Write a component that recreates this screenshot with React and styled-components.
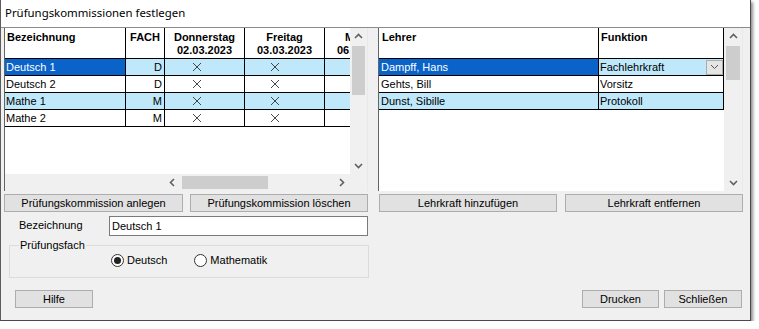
import React from 'react';
import styled, { createGlobalStyle } from 'styled-components';

const Global = createGlobalStyle`
  html, body { margin: 0; padding: 0; background: #ffffff; }
  body { font-family: "Liberation Sans", Arial, sans-serif; font-size: 11px; color: #000; }
  * { box-sizing: border-box; }
`;

const SEL = '#0a63c9';
const LIGHT = '#bfe9fb';

const Window = styled.div`
  width: 751px;
  height: 321px;
  background: #f0f0f0;
  border-left: 1px solid #5c5c5c;
  border-right: 1px solid #4a4a4a;
  border-bottom: 1px solid #4a4a4a;
  box-shadow: 2px 2px 3px rgba(0, 0, 0, 0.45);
  display: flex;
  flex-direction: column;
`;

const TitleBar = styled.div`
  height: 28px;
  background: #ffffff;
  border-bottom: 1px solid #8c8c8c;
  padding-left: 4px;
  font-family: "Noto Sans", "Liberation Sans", sans-serif;
  font-size: 11.4px;
  line-height: 26px;
  color: #000;
`;

const Body = styled.div`
  flex: 1;
  display: flex;
  flex-direction: column;
  padding: 0 7px 0 3px;
`;

const Top = styled.div`
  display: flex;
  gap: 10px;
`;

const Col = styled.div`
  width: ${(p) => p.$w}px;
  display: flex;
  flex-direction: column;
`;

const Grid = styled.div`
  height: 163px;
  display: flex;
  flex-direction: column;
  border-left: 1px solid #646464;
  border-right: 1px solid #e8e8e8;
  background: #f0f0f0;
`;

const GridMain = styled.div`
  flex: 1;
  display: flex;
  min-height: 0;
`;

const Viewport = styled.div`
  flex: 1;
  background: #ffffff;
  overflow: hidden;
`;

const Row = styled.div`
  display: grid;
  grid-template-columns: ${(p) => p.$cols};
  width: max-content;
  height: ${(p) => p.$h}px;
`;

const Cell = styled.div`
  border-right: 1px solid #000;
  border-bottom: 1px solid #000;
  background: ${(p) => (p.$sel ? SEL : p.$bg || '#fff')};
  color: ${(p) => (p.$sel ? '#fff' : '#000')};
  line-height: 16px;
  padding: 0 ${(p) => p.$pr ?? 2}px 0 ${(p) => p.$pl ?? 2}px;
  text-align: ${(p) => p.$align || 'left'};
  white-space: nowrap;
  overflow: hidden;
  display: flex;
  align-items: center;
  justify-content: ${(p) => (p.$align === 'right' ? 'flex-end' : 'flex-start')};
`;

const HeadCell = styled.div`
  border-right: 1px solid #000;
  border-bottom: 1px solid #000;
  background: #fff;
  font-weight: bold;
  line-height: 13px;
  padding: 3px ${(p) => p.$pl ?? 2}px 0;
  text-align: ${(p) => p.$align || 'left'};
  white-space: nowrap;
  overflow: hidden;
`;

const DropBtn = styled.div`
  margin-left: auto;
  width: 17px;
  height: 15px;
  background: #e5e5e5;
  border: 1px solid #acacac;
  display: flex;
  align-items: center;
  justify-content: center;
`;

const VScroll = styled.div`
  width: ${(p) => p.$w}px;
  background: #f0f0f0;
  display: flex;
  flex-direction: column;
  align-items: stretch;
`;

const ArrowBox = styled.div`
  height: ${(p) => p.$h || 17}px;
  width: ${(p) => p.$w || 'auto'};
  display: flex;
  align-items: center;
  justify-content: center;
  flex-shrink: 0;
`;

const VTrack = styled.div`
  flex: 1;
  padding: 1px 2px;
`;

const VThumb = styled.div`
  height: ${(p) => p.$h}px;
  background: #cdcdcd;
`;

const HBar = styled.div`
  height: 17px;
  display: flex;
`;

const HSpacer = styled.div`
  width: 159px;
`;

const HScroll = styled.div`
  flex: 1;
  display: flex;
  align-items: stretch;
`;

const HTrack = styled.div`
  flex: 1;
  padding: 2px 1px;
`;

const HThumb = styled.div`
  width: 86px;
  height: 100%;
  background: #cdcdcd;
`;

const Corner = styled.div`
  width: 17px;
`;

const ButtonRow = styled.div`
  display: flex;
  gap: ${(p) => p.$gap}px;
  margin-top: 3px;
  padding-left: ${(p) => p.$pl || 0}px;
`;

const Button = styled.div`
  width: ${(p) => p.$w}px;
  height: 18px;
  background: #e1e1e1;
  border: 1px solid #adadad;
  display: flex;
  align-items: center;
  justify-content: center;
  font-size: 11px;
  color: #000;
`;

const FormRow = styled.div`
  display: flex;
  margin-top: 4px;
  padding-left: 15px;
`;

const Label = styled.div`
  width: 91px;
  padding-top: 2px;
  line-height: 14px;
`;

const Input = styled.div`
  width: 259px;
  height: 20px;
  background: #fff;
  border: 1px solid #7a7a7a;
  padding-left: 2px;
  line-height: 18px;
  flex-shrink: 0;
`;

const Group = styled.div`
  position: relative;
  margin: 9px 0 0 5px;
  width: 360px;
  height: 33px;
  border: 1px solid #dcdcdc;
  display: flex;
  align-items: flex-start;
  padding: 8px 0 0 101px;
  gap: 27px;
`;

const Legend = styled.div`
  position: absolute;
  top: -8px;
  left: 9px;
  padding: 0 1px;
  background: #f0f0f0;
  line-height: 14px;
`;

const Radio = styled.div`
  display: flex;
  align-items: center;
  gap: 3px;
  line-height: 13px;
`;

const Circle = styled.div`
  width: 13px;
  height: 13px;
  border-radius: 50%;
  border: 1px solid #333;
  background: #fff;
  display: flex;
  align-items: center;
  justify-content: center;
  &::after {
    content: '';
    display: ${(p) => (p.$on ? 'block' : 'none')};
    width: 7px;
    height: 7px;
    border-radius: 50%;
    background: #222;
  }
`;

const Footer = styled.div`
  margin-top: 12px;
  display: flex;
  justify-content: space-between;
  padding: 0 1px 0 11px;
`;

const FooterRight = styled.div`
  display: flex;
  gap: 5px;
`;

const Chevron = ({ dir }) => {
  const rot = { up: 0, right: 90, down: 180, left: 270 }[dir];
  return (
    <svg width="9" height="9" viewBox="0 0 9 9" style={{ transform: `rotate(${rot}deg)` }}>
      <polyline points="1,6 4.5,2.5 8,6" fill="none" stroke="#606060" strokeWidth="1.6" />
    </svg>
  );
};

const SmallDown = () => (
  <svg width="9" height="6" viewBox="0 0 9 6">
    <polyline points="1,1 4.5,4.5 8,1" fill="none" stroke="#555" strokeWidth="1" />
  </svg>
);

const Cross = () => (
  <svg width="10" height="10" viewBox="0 0 10 10">
    <line x1="1" y1="1" x2="9" y2="9" stroke="#333" strokeWidth="0.9" />
    <line x1="9" y1="1" x2="1" y2="9" stroke="#333" strokeWidth="0.9" />
  </svg>
);

const LEFT_COLS = '121px 39px 80px 80px 80px';
const RIGHT_COLS = '220px 125px';

const leftRows = [
  { name: 'Deutsch 1', fach: 'D', sel: true, bg: LIGHT },
  { name: 'Deutsch 2', fach: 'D', bg: '#fff' },
  { name: 'Mathe 1', fach: 'M', bg: LIGHT },
  { name: 'Mathe 2', fach: 'M', bg: '#fff' },
];

const rightRows = [
  { name: 'Dampff, Hans', fn: 'Fachlehrkraft', sel: true, bg: LIGHT, drop: true },
  { name: 'Gehts, Bill', fn: 'Vorsitz', bg: '#fff' },
  { name: 'Dunst, Sibille', fn: 'Protokoll', bg: LIGHT },
];

export default function App() {
  return (
    <>
      <Global />
      <Window>
        <TitleBar>Prüfungskommissionen festlegen</TitleBar>
        <Body>
          <Top>
            <Col $w={364}>
              <Grid>
                <GridMain>
                  <Viewport>
                    <Row $cols={LEFT_COLS} $h={31}>
                      <HeadCell $pl={2}>Bezeichnung</HeadCell>
                      <HeadCell $align="center">FACH</HeadCell>
                      <HeadCell $align="center">Donnerstag<br />02.03.2023</HeadCell>
                      <HeadCell $align="center">Freitag<br />03.03.2023</HeadCell>
                      <HeadCell $align="center">Montag<br />06.03.2023</HeadCell>
                    </Row>
                    {leftRows.map((r) => (
                      <Row key={r.name} $cols={LEFT_COLS} $h={17}>
                        <Cell $sel={r.sel} $bg={r.bg} $pl={1}>{r.name}</Cell>
                        <Cell $bg={r.bg} $align="right" $pr={2}>{r.fach}</Cell>
                        <Cell $bg={r.bg} $pl={27}><Cross /></Cell>
                        <Cell $bg={r.bg} $pl={25}><Cross /></Cell>
                        <Cell $bg={r.bg} />
                      </Row>
                    ))}
                  </Viewport>
                  <VScroll $w={17}>
                    <ArrowBox><Chevron dir="up" /></ArrowBox>
                    <VTrack><VThumb $h={49} /></VTrack>
                    <ArrowBox><Chevron dir="down" /></ArrowBox>
                  </VScroll>
                </GridMain>
                <HBar>
                  <HSpacer />
                  <HScroll>
                    <ArrowBox $w="17px"><Chevron dir="left" /></ArrowBox>
                    <HTrack><HThumb /></HTrack>
                    <ArrowBox $w="17px"><Chevron dir="right" /></ArrowBox>
                  </HScroll>
                  <Corner />
                </HBar>
              </Grid>
              <ButtonRow $gap={7}>
                <Button $w={179}>Prüfungskommission anlegen</Button>
                <Button $w={178}>Prüfungskommission löschen</Button>
              </ButtonRow>
              <FormRow>
                <Label>Bezeichnung</Label>
                <Input>Deutsch 1</Input>
              </FormRow>
              <Group>
                <Legend>Prüfungsfach</Legend>
                <Radio><Circle $on />Deutsch</Radio>
                <Radio><Circle />Mathematik</Radio>
              </Group>
            </Col>
            <Col $w={365}>
              <Grid>
                <GridMain>
                  <Viewport>
                    <Row $cols={RIGHT_COLS} $h={31}>
                      <HeadCell $pl={3}>Lehrer</HeadCell>
                      <HeadCell $pl={2}>Funktion</HeadCell>
                    </Row>
                    {rightRows.map((r) => (
                      <Row key={r.name} $cols={RIGHT_COLS} $h={17}>
                        <Cell $sel={r.sel} $bg={r.bg} $pl={2}>{r.name}</Cell>
                        <Cell $bg={r.bg} $pl={1} $pr={0}>
                          {r.fn}
                          {r.drop && <DropBtn><SmallDown /></DropBtn>}
                        </Cell>
                      </Row>
                    ))}
                  </Viewport>
                  <VScroll $w={18}>
                    <ArrowBox><Chevron dir="up" /></ArrowBox>
                    <VTrack><VThumb $h={34} /></VTrack>
                    <ArrowBox><Chevron dir="down" /></ArrowBox>
                  </VScroll>
                </GridMain>
              </Grid>
              <ButtonRow $gap={8} $pl={1}>
                <Button $w={178}>Lehrkraft hinzufügen</Button>
                <Button $w={178}>Lehrkraft entfernen</Button>
              </ButtonRow>
            </Col>
          </Top>
          <Footer>
            <Button $w={78}>Hilfe</Button>
            <FooterRight>
              <Button $w={77}>Drucken</Button>
              <Button $w={78}>Schließen</Button>
            </FooterRight>
          </Footer>
        </Body>
      </Window>
    </>
  );
}
